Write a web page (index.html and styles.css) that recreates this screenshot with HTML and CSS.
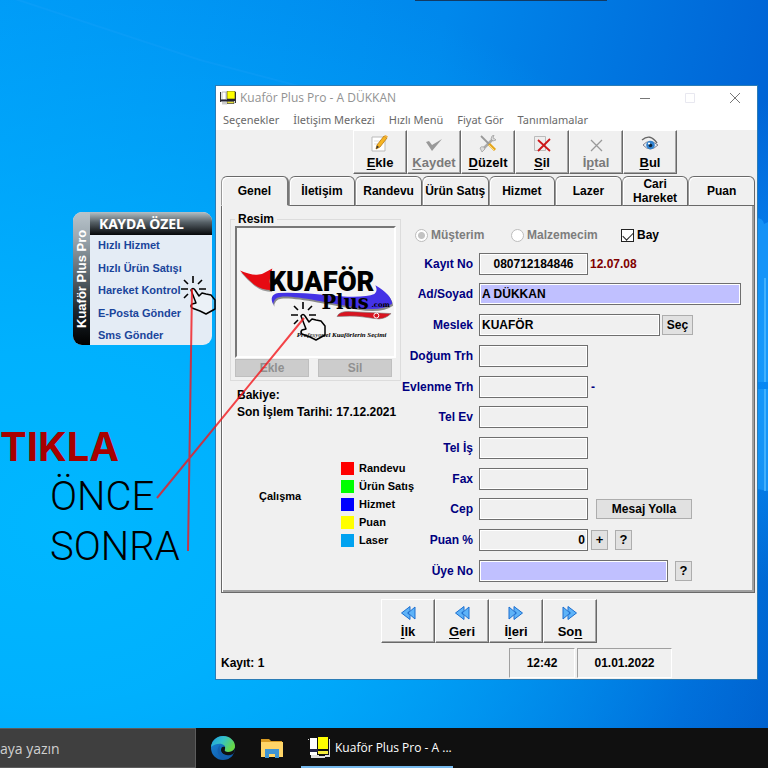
FILE: index.html
```html
<!DOCTYPE html>
<html lang="tr">
<head>
<meta charset="utf-8">
<title>Kuaför Plus Pro</title>
<link rel="stylesheet" href="styles.css">
</head>
<body>
<main class="desktop">
  <div class="top-edge"></div>

  <svg class="wall" viewBox="0 0 768 728" preserveAspectRatio="none" aria-hidden="true">
    <path d="M0 -6L200 60L420 118" stroke="#3fb0ff" stroke-opacity=".12" stroke-width="2" fill="none"/>
    <path d="M757 218q6 0 7 6l4-2v160h-11zM757 389h11v102l-11-2z" fill="#1fa2ff" fill-opacity=".6"/>
    <path d="M765 278v104M765 389v102" stroke="#56bcff" stroke-opacity=".7" stroke-width="2"/>
  </svg>

  <nav class="card">
    <div class="card-side">Kuaför Plus Pro</div>
    <div class="card-main">
      <h2 class="card-title">KAYDA ÖZEL</h2>
      <div class="card-links">
        <a href="#">Hızlı Hizmet</a>
        <a href="#">Hızlı Ürün Satışı</a>
        <a href="#">Hareket Kontrol</a>
        <a href="#">E-Posta Gönder</a>
        <a href="#">Sms Gönder</a>
      </div>
    </div>
  </nav>

  <div class="notes">
    <div class="note-click">TIKLA</div>
    <div class="note-step">ÖNCE</div>
    <div class="note-step">SONRA</div>
  </div>

  <section class="window">
    <header class="titlebar">
      <svg class="app-icon" viewBox="0 0 16 14"><path d="M.5 1v10M15.500 1v11" stroke="#333"/><path d="M2 1h4v8H2z" fill="#fff" stroke="#999" stroke-width=".6"/><path d="M7 0h8v8H7z" fill="#ff0" stroke="#333" stroke-width=".6"/><path d="M1 8.500h6v2H1zM7 8h8v2H7z" fill="#223"/><path d="M7 10.500h7v2H7z" fill="#e8e13a" stroke="#222" stroke-width=".6"/><path d="M2 11h5v2.500H2z" fill="#ccc"/></svg>
      <h1 class="title">Kuaför Plus Pro - A DÜKKAN</h1>
      <div class="controls">
        <button aria-label="Simge durumuna küçült"><svg viewBox="0 0 10 10"><path d="M0 5.5h10" stroke="#777"/></svg></button>
        <button aria-label="Ekranı kapla" disabled><svg viewBox="0 0 10 10"><path d="M.5.5h9v9h-9z" stroke="#e8e8f0" fill="none"/></svg></button>
        <button aria-label="Kapat"><svg viewBox="0 0 10 10"><path d="M0 0l10 10M10 0L0 10" stroke="#777"/></svg></button>
      </div>
    </header>
    <nav class="menubar">
      <button>Seçenekler</button><button>İletişim Merkezi</button><button>Hızlı Menü</button><button>Fiyat Gör</button><button>Tanımlamalar</button>
    </nav>

    <div class="toolbar">
      <button class="tool"><svg viewBox="0 0 18 18"><path d="M1 2h13v14H1z" fill="#fff" stroke="#bbb"/><path d="M3 6h6M3 9h4" stroke="#ddd"/><path d="M5 14l1-4 7-9 3 2-7 9z" fill="#f7b521" stroke="#b97812" stroke-width=".8"/><path d="M5 14l1-3.500 2 1.500z" fill="#333"/><path d="M13 1l3 2 1-1.500L14.500 0z" fill="#f0b040"/></svg><span><u>E</u>kle</span></button>
      <button class="tool" disabled><svg viewBox="0 0 18 18"><path d="M1 7l3-1 3 4 10-6-10 12z" fill="#999"/></svg><span><u>K</u>aydet</span></button>
      <button class="tool"><svg viewBox="0 0 18 18"><path d="M3 15L14 4" stroke="#aaa" stroke-width="2.500"/><path d="M1 13q1-2 4-1l1 2-3 3zM12 4l1-3 2-1-1 3 2 1 1 1-3 1z" fill="#ddd" stroke="#999" stroke-width=".7"/><path d="M2 1l8 8" stroke="#999" stroke-width="1.800"/><path d="M10 9l6 6" stroke="#e5a51b" stroke-width="3"/><path d="M10 10l5 5" stroke="#ffe07c"/></svg><span><u>D</u>üzelt</span></button>
      <button class="tool"><svg viewBox="0 0 18 18"><path d="M1.500 1.500h11v14h-11z" fill="#eee" stroke="#bbb"/><path d="M5 5l12 11M17 4L5 16" stroke="#cd1719" stroke-width="1.800"/></svg><span><u>S</u>il</span></button>
      <button class="tool" disabled><svg viewBox="0 0 18 18"><path d="M4 5l11 11M15 5L4 16" stroke="#999" stroke-width="1.300"/></svg><span>İ<u>p</u>tal</span></button>
      <button class="tool"><svg viewBox="0 0 18 18"><path d="M1 5q8-7 15 3" fill="none" stroke="#666" stroke-width="1.400"/><path d="M2 10q6-7 15 0-8 8-15 0z" fill="#e6edf4" stroke="#667" stroke-width=".8"/><circle cx="9.500" cy="10" r="4.300" fill="#3182cf"/><circle cx="9.500" cy="10.500" r="1.800" fill="#123"/><circle cx="8" cy="8.500" r="1.100" fill="#fff"/></svg><span><u>B</u>ul</span></button>
    </div>

    <div class="tabs" role="tablist">
      <button role="tab" class="tab active" aria-selected="true">Genel</button>
      <button role="tab" class="tab">İletişim</button>
      <button role="tab" class="tab">Randevu</button>
      <button role="tab" class="tab">Ürün Satış</button>
      <button role="tab" class="tab">Hizmet</button>
      <button role="tab" class="tab">Lazer</button>
      <button role="tab" class="tab">Cari Hareket</button>
      <button role="tab" class="tab">Puan</button>
    </div>

    <div class="panel">
      <div class="left">
        <fieldset class="photo">
          <legend>Resim</legend>
          <div class="frame">
            <svg viewBox="0 0 160 130" role="img" aria-label="Kuaför Plus">
              <path d="M3 44c10 4 18 6 24 3l9-5-3 13 2 9q-10 0-18-6Q10 52 3 44z" fill="#999" transform="translate(1 1)"/>
              <path d="M3 43c10 4 18 6 24 3l9-5-3 13 2 9q-10 0-18-6Q10 51 3 43z" fill="#e60a12"/>
              <path d="M37 79q-5-10 5-12 18-1 48 2 38 4 50-1 4-3 1-9 17 10 17 19-11 8-36 4C91 77 57 69 44 71q-7 1-7 8z" fill="#888" transform="translate(1 1)"/>
              <path d="M37 78q-5-10 5-12 18-1 48 2 38 4 50-1 4-3 1-9 17 10 17 19-11 8-36 4C91 76 57 68 44 70q-7 1-7 8z" fill="#4432e6"/>
              <path d="M102 90q2-6 15-5l40 2q-7 7-17 5-18-4-38-2z" fill="#d81420" stroke="#777" stroke-width=".6"/>
              <circle cx="142" cy="89" r="2.500" fill="none" stroke="#fff"/>
              <text x="32" y="64" class="logo-name">KUAFÖR</text>
              <text x="86" y="82" class="logo-plus">Plus</text>
              <text x="137" y="80" class="logo-com">.com</text>
              <text x="61" y="111" class="logo-tag">Profesyonel Kuaförlerin Seçimi</text>
            </svg>
          </div>
          <div class="photo-actions"><button class="btn" disabled>Ekle</button><button class="btn" disabled>Sil</button></div>
        </fieldset>
        <div class="facts"><div>Bakiye:</div><div>Son İşlem Tarihi: 17.12.2021</div></div>
        <div class="work">
          <span class="work-name">Çalışma</span>
          <ul class="keys">
            <li><i class="key red"></i>Randevu</li>
            <li><i class="key green"></i>Ürün Satış</li>
            <li><i class="key blue"></i>Hizmet</li>
            <li><i class="key yellow"></i>Puan</li>
            <li><i class="key sky"></i>Laser</li>
          </ul>
        </div>
      </div>

      <form class="form">
        <div class="kinds">
          <label class="kind off"><input type="radio" name="kind" checked disabled>Müşterim</label>
          <label class="kind off"><input type="radio" name="kind" disabled>Malzemecim</label>
          <label class="kind"><input type="checkbox" checked>Bay</label>
        </div>
        <div class="row"><label for="no">Kayıt No</label><input id="no" class="center" value="080712184846"><span class="since">12.07.08</span></div>
        <div class="row"><label for="name">Ad/Soyad</label><input id="name" class="full tint" value="A DÜKKAN"></div>
        <div class="row"><label for="job">Meslek</label><input id="job" class="long" value="KUAFÖR"><button type="button" class="btn pick">Seç</button></div>
        <div class="row"><label for="birth">Doğum Trh</label><input id="birth"></div>
        <div class="row"><label for="wed">Evlenme Trh</label><input id="wed"><span class="dash">-</span></div>
        <div class="row"><label for="home">Tel Ev</label><input id="home"></div>
        <div class="row"><label for="office">Tel İş</label><input id="office"></div>
        <div class="row"><label for="fax">Fax</label><input id="fax"></div>
        <div class="row"><label for="cell">Cep</label><input id="cell"><button type="button" class="btn send">Mesaj Yolla</button></div>
        <div class="row"><label for="points">Puan %</label><input id="points" class="right" value="0"><button type="button" class="btn small plus">+</button><button type="button" class="btn small help">?</button></div>
        <div class="row"><label for="member">Üye No</label><input id="member" class="longer tint"><button type="button" class="btn small help">?</button></div>
      </form>
    </div>

    <div class="toolbar pager">
      <button class="tool"><svg viewBox="0 0 18 18"><path d="M16 3v12l-7-6zM11 2.500v4L8.500 9l2.500 2.500v4L2.500 9z" fill="#5eb3f8" stroke="#1c6fd0"/></svg><span><u>İ</u>lk</span></button>
      <button class="tool"><svg viewBox="0 0 18 18"><path d="M16 3v12l-7-6zM11 2.500v4L8.500 9l2.500 2.500v4L2.500 9z" fill="#5eb3f8" stroke="#1c6fd0"/></svg><span><u>G</u>eri</span></button>
      <button class="tool"><svg viewBox="0 0 18 18"><path d="M2 3v12l7-6zM7 2.500v4L9.500 9 7 11.500v4L15.500 9z" fill="#5eb3f8" stroke="#1c6fd0"/></svg><span>İ<u>l</u>eri</span></button>
      <button class="tool"><svg viewBox="0 0 18 18"><path d="M2 3v12l7-6zM7 2.500v4L9.500 9 7 11.500v4L15.500 9z" fill="#5eb3f8" stroke="#1c6fd0"/></svg><span>So<u>n</u></span></button>
    </div>
    <footer class="status"><span class="count">Kayıt: 1</span><span class="cell time">12:42</span><span class="cell date">01.01.2022</span></footer>
  </section>

  <svg class="marks" aria-hidden="true">
    <defs>
      <g id="hand">
        <path d="M0-13v7M9-9L5-5M-9-9l4 4M-12 0h7M6 0h7M-9 9l4-4" fill="none" stroke="#000" stroke-width="1.600"/>
        <path d="M-2 1q2-3 4 0l4 6 3-3 4 1 5 1 4 5q0 4 0 9l-9 5-6-3-8-3q-2-2 0-4l4-1z" fill="#fff" fill-opacity=".25" stroke="#000" stroke-width="1.500" stroke-linejoin="round"/>
      </g>
    </defs>
    <use href="#hand" x="193" y="289"/>
    <use href="#hand" x="303" y="315"/>
    <path d="M192 289L188 551M304 318L157 498" stroke="#f3161c" stroke-opacity=".8" stroke-width="2" fill="none"/>
  </svg>
</main>

<footer class="taskbar">
  <input class="search" aria-label="Arama" placeholder="aya yazın">
  <button class="task" aria-label="Edge">
    <svg viewBox="0 0 24 24"><defs><linearGradient id="ea" x1="0" y1="0" x2="1" y2=".5"><stop offset="0" stop-color="#1b9de2"/><stop offset=".5" stop-color="#35c1c8"/><stop offset="1" stop-color="#68d843"/></linearGradient><linearGradient id="eb" x1="0" y1="0" x2="1" y2="1"><stop offset="0" stop-color="#1a86d9"/><stop offset="1" stop-color="#0b4f9d"/></linearGradient></defs><circle cx="12" cy="12" r="12" fill="url(#eb)"/><path d="M0 11C1 4 6 0 12 0c7 0 12 5 12 10 0 4-3 6-7 6-3 0-4-1-3-3 2-5-7-8-14-2z" fill="url(#ea)"/><path d="M14 13c-1 2 0 3 3 3 3 0 5-1 7-4 0 3-1 5-2 6-6 3-12 0-12-4 0-3 2-4 4-3z" fill="#111"/><path d="M9 9c-5 5-2 13 6 14 3 0 5-2 7-4-7 3-15-2-13-10z" fill="#135fae"/></svg>
  </button>
  <button class="task" aria-label="Dosya Gezgini">
    <svg viewBox="0 0 24 24"><path d="M1 3h8l2 2h11v16H1z" fill="#d99b22"/><path d="M1 6h22v15H1z" fill="#ffd567"/><path d="M5 13h14v9h-4v-4H9v4H5z" fill="#3f95d3"/></svg>
  </button>
  <button class="task running">
    <svg viewBox="0 0 24 24"><path d="M3 3h7v17H3z" fill="#fff"/><path d="M11 2h10v12H11z" fill="#ff0"/><path d="M3 14h8v3H3z" fill="#224"/><path d="M11 14h10v2H11z" fill="#111"/><path d="M11 16h10v3H11z" fill="#f5ec3a"/><path d="M4 20h8v1h6v-1h4V4h1v18h-5v1H4z" fill="#ddd"/><path d="M1 4h1v1H1z" fill="#ddd"/></svg>
    <span>Kuaför Plus Pro - A ...</span>
  </button>
</footer>
</body>
</html>
```
FILE: styles.css
```css
* { box-sizing: border-box; }

body {
  margin: 0;
  min-height: 100vh;
  display: flex;
  flex-direction: column;
  overflow: hidden;
  font: bold 12px/16px "Liberation Sans", Arial, sans-serif;
  color: #000;
}

button { font: inherit; color: inherit; padding: 0; border: 0; background: none; }

.desktop {
  flex: 1;
  position: relative;
  background:
    radial-gradient(ellipse 100% 80% at 8% 72%, #00b7ff 0%, rgba(0, 180, 255, .9) 30%, rgba(0, 160, 250, 0) 100%),
    radial-gradient(ellipse 20% 34% at 104% 47%, #0a92ff 0%, rgba(0, 130, 250, 0) 100%),
    linear-gradient(100deg, #0099f7 0%, #0088ec 50%, #0062d4 90%, #0060ce 100%);
}

.top-edge { position: absolute; top: 0; left: 54%; width: 25%; height: 1px; background: #123a63; }
.wall, .marks { position: absolute; inset: 0; width: 100%; height: 100%; }
.marks { pointer-events: none; }

/* quick menu */
.card {
  position: absolute;
  left: 73px;
  top: 212px;
  display: flex;
  width: 139px;
  height: 133px;
  border-radius: 9px;
  overflow: hidden;
  background: #e4ecf5;
}
.card-side {
  width: 17px;
  writing-mode: vertical-rl;
  transform: rotate(180deg);
  text-align: center;
  font-size: 13px;
  line-height: 17px;
  color: #fff;
  background: linear-gradient(#000 0%, #1c242a 25%, #9aa6ae 80%, #b9c4cb 100%);
}
.card-main { flex: 1; display: flex; flex-direction: column; }
.card-title {
  margin: 0;
  padding-left: 9px;
  font: bold 14px/23px "Noto Sans", sans-serif;
  color: #fff;
  background: linear-gradient(#b4c0c6, #566066 45%, #050709);
}
.card-links {
  flex: 1;
  display: flex;
  flex-direction: column;
  justify-content: space-between;
  padding: 2px 0 2px 8px;
}
.card-links a { font-size: 11px; color: #1a459b; text-decoration: none; }

/* big captions */
.notes { position: absolute; left: 0; top: 422px; }
.note-click { font: bold 40px/50px Inter, sans-serif; color: #a80000; }
.note-step { padding-left: 50px; font: 300 40px/50px Roboto, sans-serif; }

/* application window */
.window {
  position: absolute;
  left: 216px;
  right: 11px;
  top: 86px;
  background: #f0f0f0;
  outline: 1px solid #2b7cb6;
  outline-offset: 0;
}
.titlebar { display: flex; align-items: center; height: 24px; padding-left: 4px; background: #fff; }
.app-icon { width: 16px; height: 14px; }
.title { flex: 1; margin: 0 0 0 4px; font: 12px/24px "Open Sans", sans-serif; color: #929292; }
.controls { display: flex; }
.controls button { width: 45px; height: 24px; display: grid; place-items: center; }
.controls svg { width: 10px; height: 10px; }
.menubar { display: flex; gap: 14px; height: 20px; padding-left: 7px; background: #fff; }
.menubar button { font: 11px/20px "Noto Sans", sans-serif; color: #696969; }

.toolbar { display: flex; padding-left: 137px; font-size: 13px; }
.tool {
  display: flex;
  flex-direction: column;
  align-items: center;
  justify-content: space-between;
  width: 54px;
  height: 44px;
  padding: 4px 0 2px;
  border: 1px solid;
  border-color: #fff #696969 #696969 #fff;
  box-shadow: inset -1px -1px #a6a6a6;
}
.tool svg { width: 18px; height: 18px; }
.tool:disabled { color: #7a7a7a; }
.tool u { text-underline-offset: 2px; }

.tabs { display: flex; padding: 2px 2px 0 5px; }
.tab {
  flex: 1 1 0;
  min-width: 0;
  height: 30px;
  line-height: 14px;
  white-space: normal;
  border: 1px solid #696969;
  border-left-color: #999;
  border-radius: 6px 6px 0 0;
  box-shadow: inset 1px 1px #fff;
}
.tab.active { border-right: 2px solid #777; border-bottom-color: #f0f0f0; }
.tab:not(.active) { white-space: nowrap; }
.tab:nth-child(7) { white-space: normal; }

.panel {
  display: flex;
  min-height: 387px;
  margin: 0 2px 0 5px;
  padding-bottom: 8px;
  border: 1px solid #696969;
  border-top: 0;
  box-shadow: inset 1px 0 #fff, inset -2px -2px #a0a0a0;
}
.left { width: 180px; padding: 6px 0 0 8px; }
.photo { width: 171px; margin: 0; padding: 0 4px 3px; border: 1px solid #dcdcdc; }
.photo legend { padding: 0 3px; line-height: 14px; }
.frame { height: 132px; border: 2px solid; border-color: #777 #fff #fff #777; background: #f4f4f4; }
.frame svg { display: block; width: 100%; height: 100%; }
.logo-name { font: 900 28px Roboto, sans-serif; }
.logo-plus { font: bold 20px "DejaVu Serif", serif; }
.logo-com { font: bold 7px "DejaVu Serif", serif; }
.logo-tag { font: italic bold 7px "Liberation Serif", serif; }
.photo-actions { display: flex; gap: 9px; padding: 1px 4px 0 0; }
.btn { height: 20px; line-height: 18px; border: 1px solid #adadad; background: #e1e1e1; }
.photo-actions .btn { flex: 1; height: 18px; line-height: 16px; border-color: #bfbfbf; background: #ccc; color: #909090; }
.facts { padding: 6px 0 0 7px; line-height: 17px; white-space: nowrap; }
.work { display: flex; align-items: center; padding: 38px 0 0 29px; font-size: 11px; }
.work-name { flex: none; width: 82px; padding-bottom: 16px; }
.keys { margin: 0; padding: 0; list-style: none; line-height: 18px; white-space: nowrap; }
.keys li { display: flex; align-items: center; gap: 5px; }
.key { width: 13px; height: 13px; }
.red { background: #f00; }
.green { background: #0f0; }
.blue { background: #00f; }
.yellow { background: #ff0; }
.sky { background: #00a2f0; }

.form { flex: 1; display: flex; flex-direction: column; justify-content: space-between; padding: 20px 13px 2px 0; }
.kinds { display: flex; align-items: center; height: 18px; padding-left: 13px; }
.kind { display: flex; align-items: center; gap: 3px; width: 96px; }
.kind + .kind { width: 110px; }
.kind + .kind + .kind { width: auto; }
.off { color: #7d7d7d; }
.kind input { appearance: none; width: 13px; height: 13px; margin: 0; border: 1px solid #bdbdbd; border-radius: 50%; background: #fff; }
.kind input[type="radio"]:checked { background: radial-gradient(circle, #c3c3c3 0 3px, #fff 4px); }
.kind input[type="checkbox"] {
  display: flex;
  justify-content: center;
  align-items: flex-start;
  border: 1px solid #222;
  border-radius: 0;
}
.kind input[type="checkbox"]::before {
  content: "";
  flex: none;
  width: 9px;
  height: 5px;
  margin-top: 2px;
  border: solid #222;
  border-width: 0 0 1px 1px;
  transform: rotate(-45deg);
}

.row { display: flex; align-items: center; height: 22px; white-space: nowrap; }
.row label { width: 71px; margin-right: 6px; text-align: right; color: #000080; }
.row input {
  width: 109px;
  height: 22px;
  padding: 0 2px;
  border: 1px solid #6f6f6f;
  box-shadow: inset 0 0 0 1px #fff;
  background: #f0f0f0;
  font: inherit;
  color: #000;
}
.row .long { width: 181px; }
.row .longer { width: 189px; }
.row .full { flex: 1; }
.row .tint { background: #c0c0ff; }
.row .center { text-align: center; }
.row .right { text-align: right; }
.since { margin-left: 2px; color: #800000; }
.dash { margin-left: 3px; color: #000080; }
.pick { width: 31px; margin-left: 2px; }
.send { width: 96px; margin-left: 8px; }
.small { width: 17px; font-size: 13px; }
.plus { margin-left: 3px; }
.help { margin-left: 7px; }

.pager { padding: 6px 0 0 165px; }
.status { display: flex; align-items: center; gap: 2px; height: 36px; padding: 5px 0 1px 5px; }
.count { width: 286px; }
.cell { height: 30px; line-height: 29px; text-align: center; border: 1px solid; border-color: #a0a0a0 #fff #fff #a0a0a0; }
.time { width: 66px; }
.date { width: 95px; }

/* taskbar */
.taskbar { display: flex; height: 40px; background: #101010; color: #fff; }
.search { width: 196px; padding: 0; border: 1px solid #5c5c5c; border-width: 1px 1px 1px 0; border-radius: 0; background: #3f3f3f; font: 14px "Open Sans", sans-serif; }
.search::placeholder { color: #d0d0d0; opacity: 1; }
.task { display: flex; align-items: center; justify-content: center; width: 50px; margin-left: 2px; }
.task + .task { margin-left: -1px; }
.task svg { width: 24px; height: 24px; }
.task.running { justify-content: flex-start; width: 152px; padding-left: 6px; gap: 4px; border-bottom: 2px solid #76b9ed; font: 12px "Open Sans", sans-serif; }
.task + .task.running { margin-left: 4px; }
```
